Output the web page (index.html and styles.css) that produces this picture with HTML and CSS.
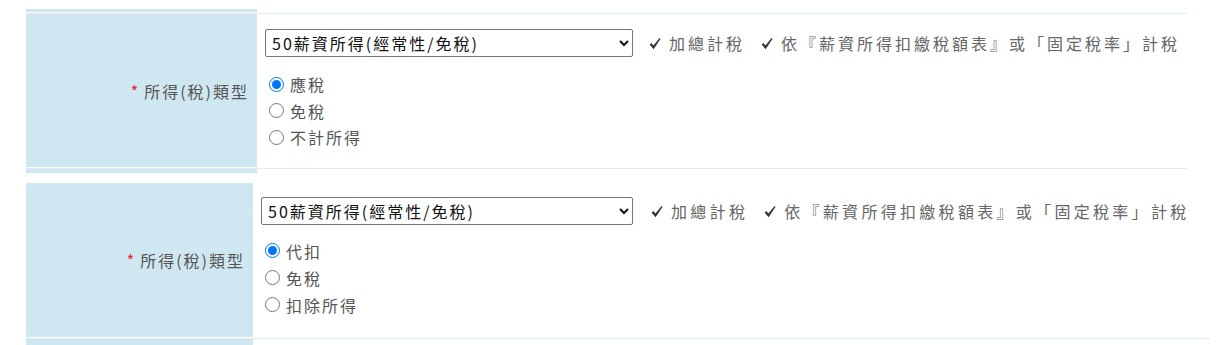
FILE: index.html
```html
<!DOCTYPE html>
<html lang="zh-Hant">
<head>
<meta charset="utf-8">
<title>所得(稅)類型</title>
<link rel="stylesheet" href="styles.css">
</head>
<body>
<div class="tbl tbl-a">
  <div class="row stub first"><div class="lab"></div><div class="val"></div></div>
  <div class="row main">
    <div class="lab"><span class="req">*</span>所得(稅)類型</div>
    <div class="val">
      <div class="top">
        <select class="sel">
          <option>50薪資所得(經常性/免稅)</option>
        </select>
        <span class="note"><svg class="chk" viewBox="0 0 12 13" width="12" height="13"><path d="M0.6 7.4 L2.4 5.9 L4.4 8.6 L10.6 0.9 L11.6 1.8 L4.6 12.2 Z" fill="#333"/></svg>加總計稅</span>
        <span class="note"><svg class="chk" viewBox="0 0 12 13" width="12" height="13"><path d="M0.6 7.4 L2.4 5.9 L4.4 8.6 L10.6 0.9 L11.6 1.8 L4.6 12.2 Z" fill="#333"/></svg>依『薪資所得扣繳稅額表』或「固定稅率」計稅</span>
      </div>
      <div class="opts">
        <label class="opt"><input type="radio" name="a" checked>應稅</label>
        <label class="opt"><input type="radio" name="a">免稅</label>
        <label class="opt"><input type="radio" name="a">不計所得</label>
      </div>
    </div>
  </div>
  <div class="row stub"><div class="lab"></div><div class="val"></div></div>
</div>

<div class="tbl tbl-b">
  <div class="row main">
    <div class="lab"><span class="req">*</span>所得(稅)類型</div>
    <div class="val">
      <div class="top">
        <select class="sel">
          <option>50薪資所得(經常性/免稅)</option>
        </select>
        <span class="note"><svg class="chk" viewBox="0 0 12 13" width="12" height="13"><path d="M0.6 7.4 L2.4 5.9 L4.4 8.6 L10.6 0.9 L11.6 1.8 L4.6 12.2 Z" fill="#333"/></svg>加總計稅</span>
        <span class="note"><svg class="chk" viewBox="0 0 12 13" width="12" height="13"><path d="M0.6 7.4 L2.4 5.9 L4.4 8.6 L10.6 0.9 L11.6 1.8 L4.6 12.2 Z" fill="#333"/></svg>依『薪資所得扣繳稅額表』或「固定稅率」計稅</span>
      </div>
      <div class="opts">
        <label class="opt"><input type="radio" name="b" checked>代扣</label>
        <label class="opt"><input type="radio" name="b">免稅</label>
        <label class="opt"><input type="radio" name="b">扣除所得</label>
      </div>
    </div>
  </div>
  <div class="row stub"><div class="lab"></div><div class="val"></div></div>
</div>
</body>
</html>
```

FILE: styles.css
```css
html, body {
  margin: 0;
  padding: 0;
  background: #fff;
}
body {
  font-family: "Noto Sans CJK TC", "Noto Sans", sans-serif;
  font-size: 16px;
  color: #555;
  overflow: hidden;
}
.tbl {
  margin-left: 26px;
}
.tbl-a {
  width: 1161px;
  margin-top: 9px;
}
.tbl-b {
  width: 1184px;
  margin-top: 9px;
}
.row {
  display: flex;
  border-top: 1px solid #deedf5;
  border-bottom: 1px solid #fff;
}
.row.first {
  border-top: 0;
}
.tbl-b .row.main {
  border-top: 0;
}
.lab {
  background: #cfe7f0;
  flex: none;
  display: flex;
  align-items: center;
  justify-content: flex-end;
  padding-right: 8px;
  letter-spacing: 2px;
  color: #555;
  box-sizing: border-box;
}
.tbl-a .lab { width: 231px; }
.tbl-b .lab { width: 227px; }
.val {
  flex: 1;
  padding-left: 8px;
}
.stub .lab, .stub .val { height: 3px; }
.tbl-a .stub:not(.first) .lab,
.tbl-a .stub:not(.first) .val { height: 4px; }
.tbl-b .stub .lab,
.tbl-b .stub .val { height: 8px; }
.req {
  color: #e8202a;
  margin-right: 6px;
  letter-spacing: 0;
}
.main .val {
  padding-top: 15px;
  padding-bottom: 16.5px;
}
.tbl-b .main .val {
  padding-top: 14px;
  padding-bottom: 19px;
}
.top {
  display: flex;
  align-items: center;
  height: 28px;
}
.sel {
  font-family: "Noto Sans CJK TC", "Noto Sans", sans-serif;
  font-size: 16px;
  color: #111;
  letter-spacing: 2px;
  height: 28px;
  width: 368px;
  padding: 0 2px;
  border: 1px solid #767676;
  border-radius: 2px;
  background: #fff;
  margin: 0;
}
.tbl-b .sel {
  width: 372px;
}
.note {
  display: inline-flex;
  align-items: center;
  color: #666;
  letter-spacing: 3px;
  margin-left: 16px;
  white-space: nowrap;
}
.tbl-b .note {
  letter-spacing: 3.3px;
}
.tbl-b .note:first-of-type {
  margin-left: 18px;
}
.chk {
  flex: none;
  margin-right: 8px;
}
.opts {
  margin-top: 14px;
  display: flex;
  flex-direction: column;
}
.tbl-b .opts {
  margin-top: 12px;
}
.opt {
  display: flex;
  align-items: center;
  height: 26.5px;
  letter-spacing: 2px;
  color: #555;
}
.tbl-b .opt {
  height: 27px;
}
.opt input {
  flex: none;
  width: 15px;
  height: 15px;
  margin: 0 6px 0 4px;
}
```
